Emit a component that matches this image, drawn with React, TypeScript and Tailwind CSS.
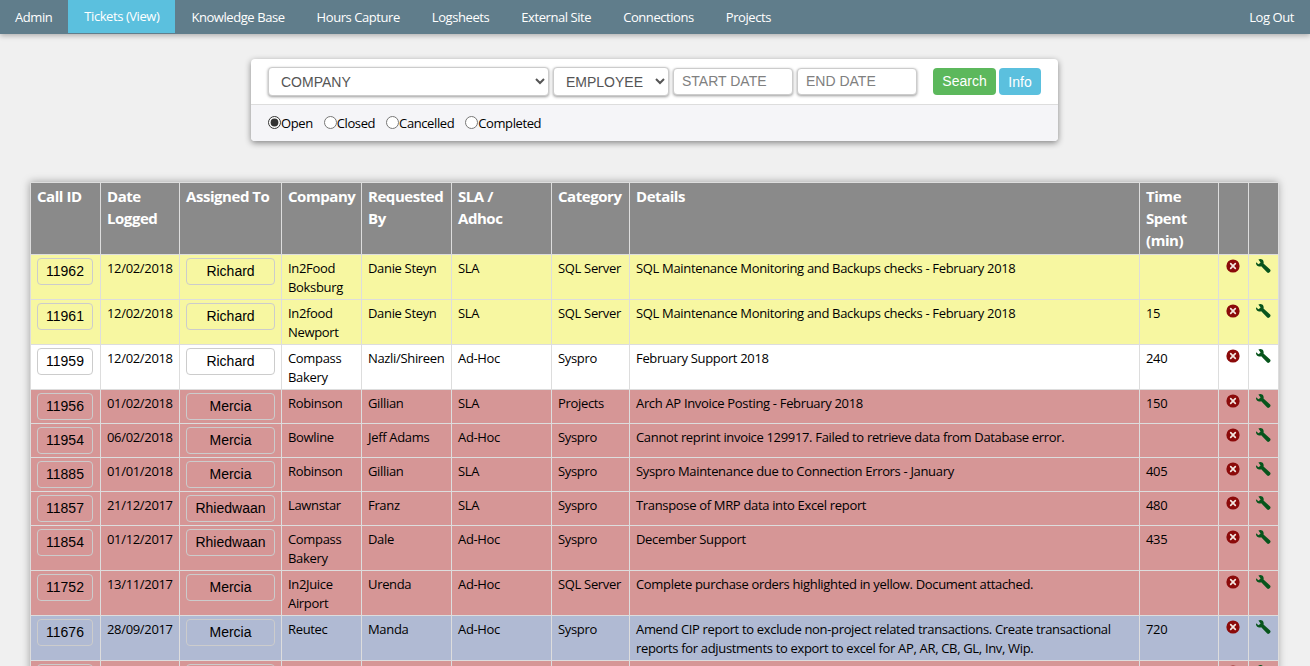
const navItems = ["Admin", "Tickets (View)", "Knowledge Base", "Hours Capture", "Logsheets", "External Site", "Connections", "Projects"];

const rowColors = {
  yellow: "bg-[#f7f7a1]",
  white: "bg-white",
  red: "bg-[#d69696]",
  blue: "bg-[#b0bad3]",
};

type Ticket = {
  id: string;
  date: string;
  who: string;
  company: string[];
  by: string;
  sla: string;
  category: string;
  details: string[];
  time: string;
  color: keyof typeof rowColors;
};

const tickets: Ticket[] = [
  { id: "11962", date: "12/02/2018", who: "Richard", company: ["In2Food", "Boksburg"], by: "Danie Steyn", sla: "SLA", category: "SQL Server", details: ["SQL Maintenance Monitoring and Backups checks - February 2018"], time: "", color: "yellow" },
  { id: "11961", date: "12/02/2018", who: "Richard", company: ["In2food", "Newport"], by: "Danie Steyn", sla: "SLA", category: "SQL Server", details: ["SQL Maintenance Monitoring and Backups checks - February 2018"], time: "15", color: "yellow" },
  { id: "11959", date: "12/02/2018", who: "Richard", company: ["Compass", "Bakery"], by: "Nazli/Shireen", sla: "Ad-Hoc", category: "Syspro", details: ["February Support 2018"], time: "240", color: "white" },
  { id: "11956", date: "01/02/2018", who: "Mercia", company: ["Robinson"], by: "Gillian", sla: "SLA", category: "Projects", details: ["Arch AP Invoice Posting - February 2018"], time: "150", color: "red" },
  { id: "11954", date: "06/02/2018", who: "Mercia", company: ["Bowline"], by: "Jeff Adams", sla: "Ad-Hoc", category: "Syspro", details: ["Cannot reprint invoice 129917. Failed to retrieve data from Database error."], time: "", color: "red" },
  { id: "11885", date: "01/01/2018", who: "Mercia", company: ["Robinson"], by: "Gillian", sla: "SLA", category: "Syspro", details: ["Syspro Maintenance due to Connection Errors - January"], time: "405", color: "red" },
  { id: "11857", date: "21/12/2017", who: "Rhiedwaan", company: ["Lawnstar"], by: "Franz", sla: "SLA", category: "Syspro", details: ["Transpose of MRP data into Excel report"], time: "480", color: "red" },
  { id: "11854", date: "01/12/2017", who: "Rhiedwaan", company: ["Compass", "Bakery"], by: "Dale", sla: "Ad-Hoc", category: "Syspro", details: ["December Support"], time: "435", color: "red" },
  { id: "11752", date: "13/11/2017", who: "Mercia", company: ["In2Juice", "Airport"], by: "Urenda", sla: "Ad-Hoc", category: "SQL Server", details: ["Complete purchase orders highlighted in yellow. Document attached."], time: "", color: "red" },
  { id: "11676", date: "28/09/2017", who: "Mercia", company: ["Reutec"], by: "Manda", sla: "Ad-Hoc", category: "Syspro", details: ["Amend CIP report to exclude non-project related transactions. Create transactional", "reports for adjustments to export to excel for AP, AR, CB, GL, Inv, Wip."], time: "720", color: "blue" },
  { id: "", date: "", who: "", company: [""], by: "", sla: "", category: "", details: [""], time: "", color: "red" },
];

const headers = [["Call ID"], ["Date", "Logged"], ["Assigned To"], ["Company"], ["Requested", "By"], ["SLA /", "Adhoc"], ["Category"], ["Details"], ["Time", "Spent", "(min)"], [""], [""]];

const thClass = "border border-[#dddddd] px-1.5 pt-[2px] pb-0 align-top text-left text-[15px] leading-[22px] font-bold tracking-[-0.45px] text-white h-[72px] whitespace-nowrap";
const tdClass = "border border-[#dddddd] px-1.5 pt-[4px] pb-[2px] align-top text-[13px] leading-[19px] tracking-[-0.33px] text-black whitespace-nowrap";
const cellBtn = "h-[27px] rounded border border-[#cccccc] text-center text-[14px] text-black font-['Liberation_Sans',Arial,sans-serif]";

function RemoveIcon() {
  return (
    <svg viewBox="0 0 14 14" className="h-[14px] w-[14px]">
      <circle cx="7" cy="7" r="6.6" fill="#8b0a0a" />
      <path d="M4.7 4.7 9.3 9.3M9.3 4.7 4.7 9.3" stroke="#f3e6e0" strokeWidth="1.7" strokeLinecap="round" />
    </svg>
  );
}

function WrenchIcon() {
  return (
    <svg viewBox="0 0 16 16" className="h-[16px] w-[16px]">
      <path
        d="M1 4.2 3.6 6.3 5.6 4.4 3.4 1.6C5.2.4 7.6 1 8.4 2.9 8.8 3.9 8.8 4.8 8.5 5.6L15.1 11.6C15.7 12.2 15.7 13 15.1 13.7L14.2 14.6C13.6 15.2 12.8 15.2 12.2 14.6L6.2 8.3C5.3 8.7 4.2 8.7 3.3 8.3 1.7 7.6.7 5.9 1 4.2Z"
        fill="#07551c"
      />
    </svg>
  );
}

function Radio({ label, checked }: { label: string; checked?: boolean }) {
  return (
    <label className="flex items-center text-[13px] tracking-[-0.4px] text-black">
      <input type="radio" name="status" defaultChecked={checked} className="m-0 -mt-1 h-[13px] w-[13px] accent-[#333333]" />
      {label}
    </label>
  );
}

export default function App() {
  return (
    <div className="h-screen overflow-hidden bg-[#f0f0f0] font-['Open_Sans','Noto_Sans',sans-serif]">
      <nav className="flex h-[34px] items-center justify-between bg-[#607d8b] pt-px text-[13px] tracking-[-0.43px] text-white shadow-[0_2px_5px_rgba(0,0,0,0.26)]">
        <div className="flex h-full -ml-px">
          {navItems.map((item) => (
            <a key={item} className={`flex h-full items-center px-4 ${item === "Tickets (View)" ? "-mt-px h-[34px] bg-[#5bc0de]" : ""}`}>
              {item}
            </a>
          ))}
        </div>
        <a className="pr-4">Log Out</a>
      </nav>

      <div className="mt-[25px] ml-[251px] w-[807px] rounded-sm bg-white shadow-[0_2px_6px_rgba(0,0,0,0.45)]">
        <div className="flex h-[46px] items-center border-b border-[#dddddd] pl-[17px] font-['Liberation_Sans',Arial,sans-serif] text-[14px] text-[#555555]">
          <select className="h-[29px] w-[281px] rounded border border-[#cccccc] bg-white pl-2 text-[14px] shadow-[0_1px_3px_rgba(0,0,0,0.4)]">
            <option>COMPANY</option>
          </select>
          <select className="ml-1 h-[29px] w-[116px] rounded border border-[#cccccc] bg-white pl-2 text-[14px] shadow-[0_1px_3px_rgba(0,0,0,0.4)]">
            <option>EMPLOYEE</option>
          </select>
          <input placeholder="START DATE" className="ml-1 h-[27px] w-[120px] rounded border border-[#cccccc] bg-white px-2 pb-0.5 text-[14px] shadow-[0_1px_3px_rgba(0,0,0,0.4)] placeholder:text-[#808080]" />
          <input placeholder="END DATE" className="ml-1 h-[27px] w-[120px] rounded border border-[#cccccc] bg-white px-2 pb-0.5 text-[14px] shadow-[0_1px_3px_rgba(0,0,0,0.4)] placeholder:text-[#808080]" />
          <button className="ml-4 h-[27px] w-[63px] rounded bg-[#5cb85c] text-white">Search</button>
          <button className="ml-[3px] h-[27px] w-[42px] rounded bg-[#5bc0de] pt-px text-white">Info</button>
        </div>
        <div className="flex h-[36px] items-center gap-[11px] rounded-b-sm bg-[#f5f5f8] pt-[2px] pl-[17px]">
          <Radio label="Open" checked />
          <Radio label="Closed" />
          <Radio label="Cancelled" />
          <Radio label="Completed" />
        </div>
      </div>

      <div className="mt-[41px] ml-[30px] w-[1248px] shadow-[0_0_8px_rgba(0,0,0,0.35)]">
        <table className="w-full table-fixed border-collapse">
          <colgroup>
            <col className="w-[70px]" />
            <col className="w-[79px]" />
            <col className="w-[102px]" />
            <col className="w-[80px]" />
            <col className="w-[90px]" />
            <col className="w-[100px]" />
            <col className="w-[78px]" />
            <col className="w-[510px]" />
            <col className="w-[79px]" />
            <col className="w-[30px]" />
            <col className="w-[30px]" />
          </colgroup>
          <thead>
            <tr className="bg-[#8a8a8a]">
              {headers.map((lines, i) => (
                <th key={i} className={thClass}>
                  {lines.map((line) => (
                    <div key={line}>{line}</div>
                  ))}
                </th>
              ))}
            </tr>
          </thead>
          <tbody>
            {tickets.map((t, i) => (
              <tr key={i} className={rowColors[t.color]}>
                <td className="border border-[#dddddd] px-1.5 pt-[3px] pb-[3px] align-top">
                  <button className={`${cellBtn} block w-[56px]`}>{t.id}</button>
                </td>
                <td className={tdClass}>{t.date}</td>
                <td className="border border-[#dddddd] px-1.5 pt-[3px] pb-[3px] align-top">
                  <button className={`${cellBtn} block w-[89px]`}>{t.who}</button>
                </td>
                <td className={tdClass}>
                  {t.company.map((line) => (
                    <div key={line}>{line}</div>
                  ))}
                </td>
                <td className={tdClass}>{t.by}</td>
                <td className={tdClass}>{t.sla}</td>
                <td className={tdClass}>{t.category}</td>
                <td className={tdClass}>
                  {t.details.map((line) => (
                    <div key={line}>{line}</div>
                  ))}
                </td>
                <td className={tdClass}>{t.time}</td>
                <td className="border border-[#dddddd] pt-1 pl-[7px] align-top">
                  <RemoveIcon />
                </td>
                <td className="border border-[#dddddd] pt-[3px] pl-[6px] align-top">
                  <WrenchIcon />
                </td>
              </tr>
            ))}
          </tbody>
        </table>
      </div>
    </div>
  );
}
